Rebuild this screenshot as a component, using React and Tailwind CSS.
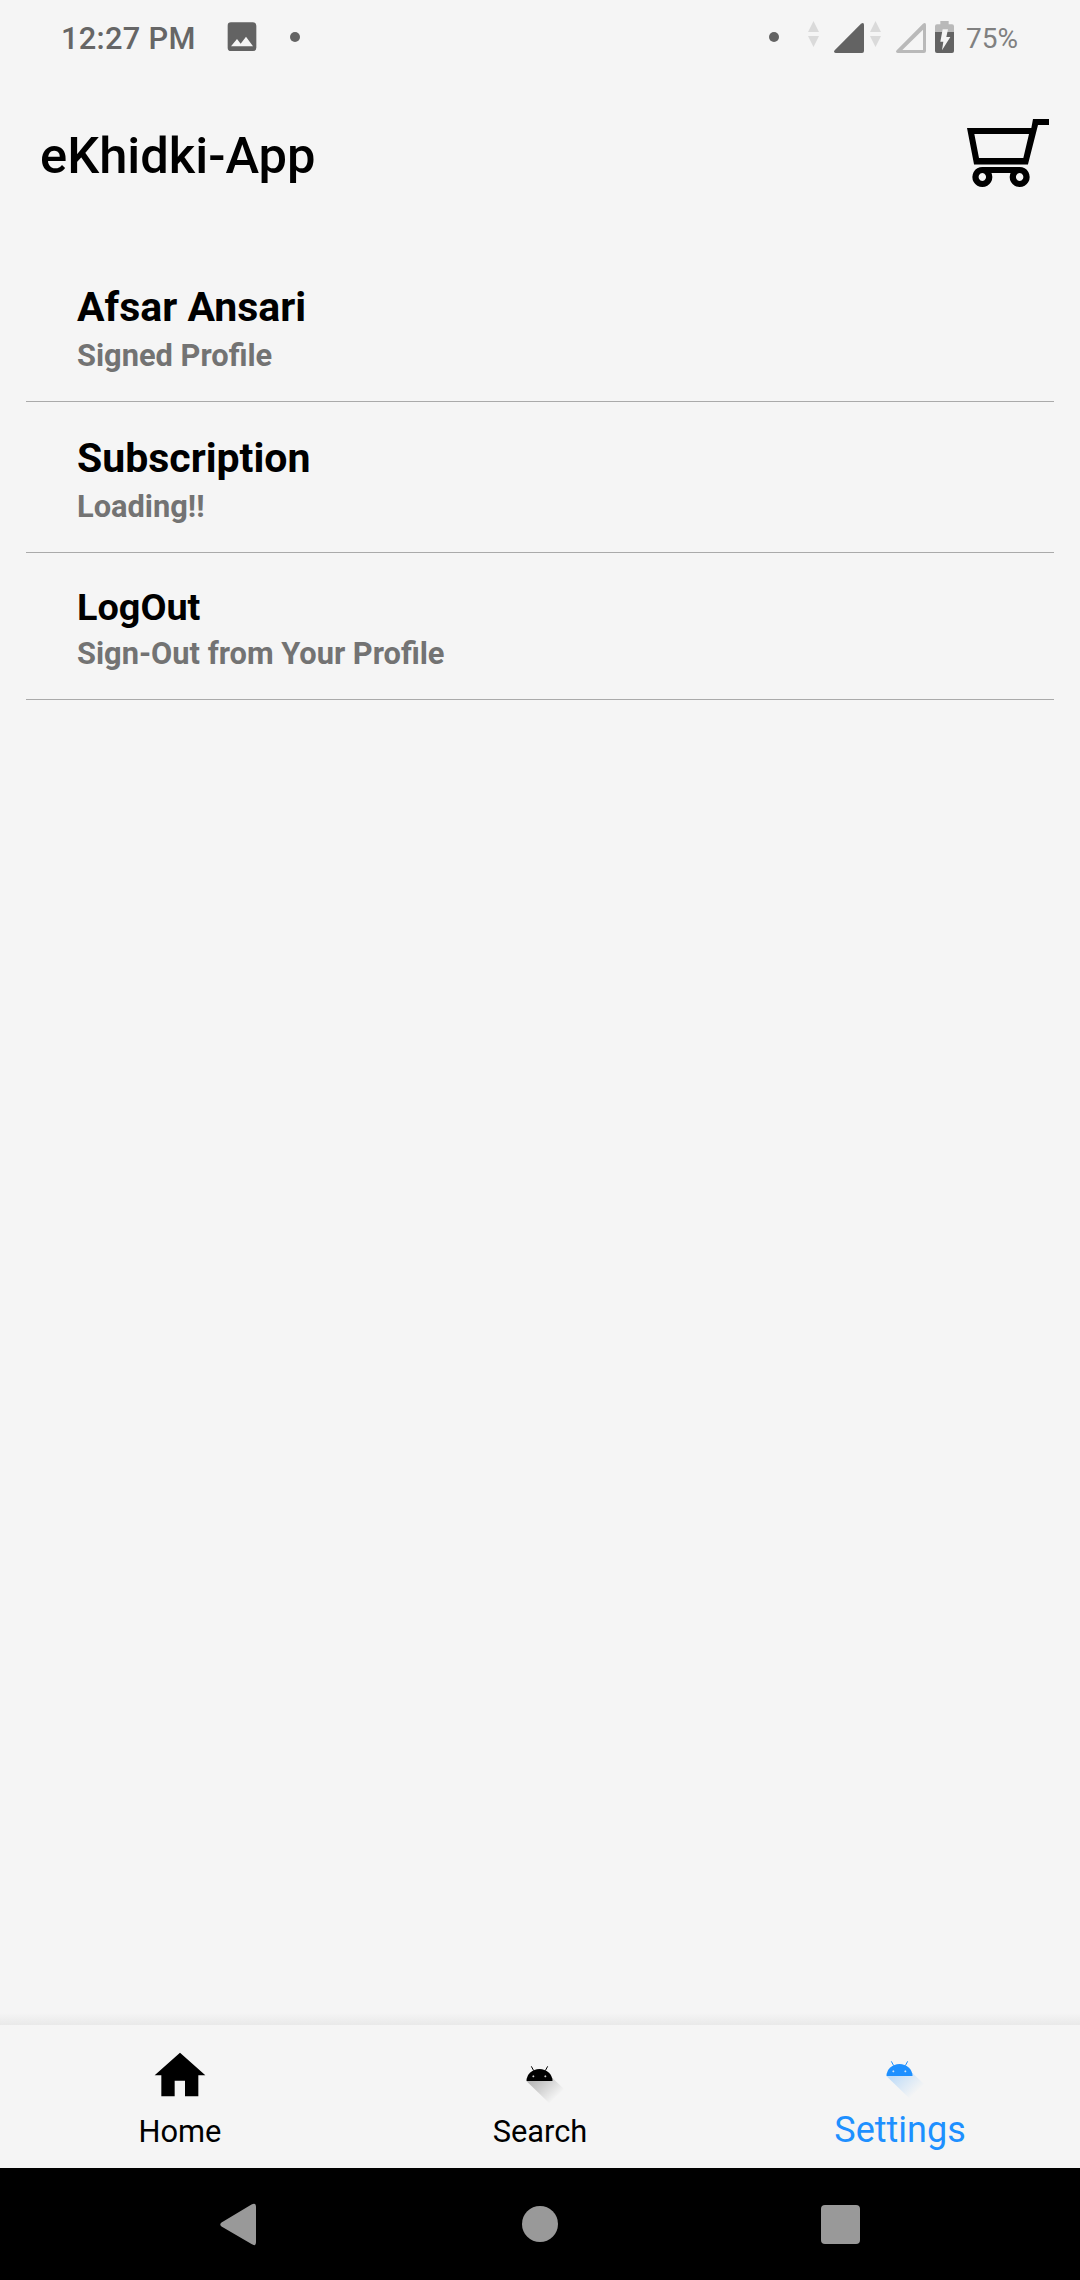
function Dot() {
  return <span className="block size-[10px] rounded-full bg-[#636363]" />;
}

function DataArrows({ className }) {
  return (
    <svg className={className} width="11" height="26" viewBox="0 0 33 78" fill="#dadada">
      <path d="M16.5 0L33 33H0zM0 45h33L16.5 78z" />
    </svg>
  );
}

function StatusBar() {
  return (
    <div className="flex h-[74px] items-start justify-between px-[62px] text-[#666]">
      <div className="flex items-start">
        <span className="mt-[19px] -ml-px w-[141px] whitespace-nowrap text-[30.8px] leading-[39px] font-medium tracking-[0.3px]">12:27 PM</span>
        <svg className="mt-[22px] ml-[25px]" width="30" height="30" viewBox="0 0 90 90">
          <path
            fill="#636363"
            fillRule="evenodd"
            d="M12 1H78Q88 1 88 11V77Q88 87 78 87H12Q2 87 2 77V11Q2 1 12 1ZM12 73H78L57 44L41 65L30 51Z"
          />
        </svg>
        <span className="mt-[32px] ml-[33px]"><Dot /></span>
      </div>
      <div className="flex items-start">
        <span className="mt-[32px]"><Dot /></span>
        <DataArrows className="mt-[21px] ml-[29px]" />
        <svg className="mt-[23px] ml-[15px]" width="30" height="30" viewBox="0 0 90 90">
          <path fill="#636363" d="M2 82L81 2Q90 -3 90 6V84Q90 90 84 90H5Q-3 88 2 82Z" />
        </svg>
        <DataArrows className="mt-[21px] ml-[6px]" />
        <svg className="mt-[23px] ml-[15px]" width="30" height="30" viewBox="0 0 90 90">
          <path
            fill="#b9b9b9"
            fillRule="evenodd"
            d="M2 82L81 2Q90 -3 90 6V84Q90 90 84 90H5Q-3 88 2 82ZM19 81H81V20Z"
          />
        </svg>
        <svg className="mt-[21px] ml-[9px]" width="19" height="32" viewBox="0 0 57 96">
          <path fill="#b9b9b9" d="M16 0H41V10H51Q57 10 57 16V34H0V16Q0 10 6 10H16Z" />
          <path fill="#636363" d="M0 33H57V90Q57 96 51 96H6Q0 96 0 90Z" />
          <path fill="#f4f4f4" d="M23 25H39L34 48H46L21 88L25 62H16Z" />
        </svg>
        <span className="mt-[19px] ml-[12px] w-[52px] whitespace-nowrap text-[28px] leading-[39px] text-[#808080]">75%</span>
      </div>
    </div>
  );
}

function CartIcon() {
  return (
    <svg width="82" height="68" viewBox="681 357 246 204">
      <path
        fillRule="evenodd"
        d="M681 384H874L879 357H927V375H894L864 493H702ZM703 402L717 474H850L867 402Z"
      />
      <rect x="727" y="501" width="112" height="18" />
      <path
        fillRule="evenodd"
        d="M727 501a30 30 0 1 0 .1 0zM727 519a11 12 0 1 1 -.1 0zM839 501a30 30 0 1 0 .1 0zM839 519a11 12 0 1 1 -.1 0z"
      />
      <rect x="702" y="492" width="162" height="3" fill="#777" />
    </svg>
  );
}

function HomeIcon() {
  return (
    <svg width="52" height="46" viewBox="0 0 156 138">
      <path d="M78 2L154 70H133V133H93V86H62V133H22V70H2Z" />
    </svg>
  );
}

function DroidIcon({ id, color, shadow }) {
  return (
    <svg width="40" height="42" viewBox="150 159 120 126" overflow="visible">
      <defs>
        <linearGradient id={id} gradientUnits="userSpaceOnUse" x1="205" y1="200" x2="262" y2="260">
          <stop offset="0" stopColor={shadow} stopOpacity="0.24" />
          <stop offset="1" stopColor={shadow} stopOpacity="0" />
        </linearGradient>
      </defs>
      <path fill={`url(#${id})`} d="M169 213L238 280L282 237L245 202Z" />
      <path fill={color} d="M169.500 213A39 36 0 0 1 247.500 213Z" />
      <path stroke={color} strokeWidth="3" d="M184 169L191 182M233 169L226 182" />
      <path stroke="#f5f5f5" strokeOpacity="0.85" strokeWidth="2.5" d="M187 199h6M190 196v6M223 199h6M226 196v6" />
    </svg>
  );
}

function SettingRow({ title, subtitle, small }) {
  return (
    <li className={small ? "border-b border-[#aaa] pt-[32px] pb-[27px] pl-[51px]" : "border-b border-[#aaa] pt-[31px] pb-[27px] pl-[51px]"}>
      <p className={small ? "mb-[6px] text-[37.8px] leading-[44px] font-bold text-black" : "mb-[5px] text-[41px] leading-[50px] font-bold text-black"}>{title}</p>
      <p className="text-[30.8px] leading-[37px] font-bold text-[#737373]">{subtitle}</p>
    </li>
  );
}

export default function App() {
  return (
    <div className="flex h-[2280px] w-[1080px] flex-col overflow-hidden bg-[#f5f5f5] font-['Roboto',sans-serif] text-black">
      <StatusBar />
      <header className="flex h-[177px] items-start justify-between pl-[40px] pr-[31px]">
        <h1 className="mt-[51px] text-[50.7px] leading-[61px] font-medium">eKhidki-App</h1>
        <div className="mt-[45px]"><CartIcon /></div>
      </header>
      <ul className="mx-[26px] flex-1">
        <SettingRow title="Afsar Ansari" subtitle="Signed Profile" />
        <SettingRow title="Subscription" subtitle="Loading!!" />
        <SettingRow small title="LogOut" subtitle="Sign-Out from Your Profile" />
      </ul>
      <div className="h-3 bg-linear-to-b from-transparent to-black/5" />
      <nav className="grid h-[143px] grid-cols-3 bg-[#f5f5f5]">
        <div className="flex flex-col items-center">
          <div className="mt-[27px] h-[61px]"><HomeIcon /></div>
          <span className="text-[30.8px] leading-[37px]">Home</span>
        </div>
        <div className="flex flex-col items-center">
          <div className="mt-[38px] h-[50px]"><DroidIcon id="droid-search" color="#000" shadow="#000" /></div>
          <span className="text-[30.8px] leading-[37px]">Search</span>
        </div>
        <div className="flex flex-col items-center text-[#1e90ff]">
          <div className="mt-[33px] h-[50px]"><DroidIcon id="droid-settings" color="#1e90ff" shadow="#1e90ff" /></div>
          <span className="text-[36px] leading-[44px]">Settings</span>
        </div>
      </nav>
      <div className="flex h-[112px] items-start bg-black">
        <svg className="mt-[35px] ml-[220px]" width="36" height="43" viewBox="0 0 36 43">
          <path fill="#999" d="M31.500 1.500Q36 -1 36 4V39Q36 44 31.500 41L1.500 23.500Q-1 21.500 1.500 19.500Z" />
        </svg>
        <span className="mt-[38px] ml-[266px] size-[36px] rounded-full bg-[#999]" />
        <span className="mt-[37px] ml-[263px] size-[39px] rounded-[4px] bg-[#999]" />
      </div>
    </div>
  );
}
